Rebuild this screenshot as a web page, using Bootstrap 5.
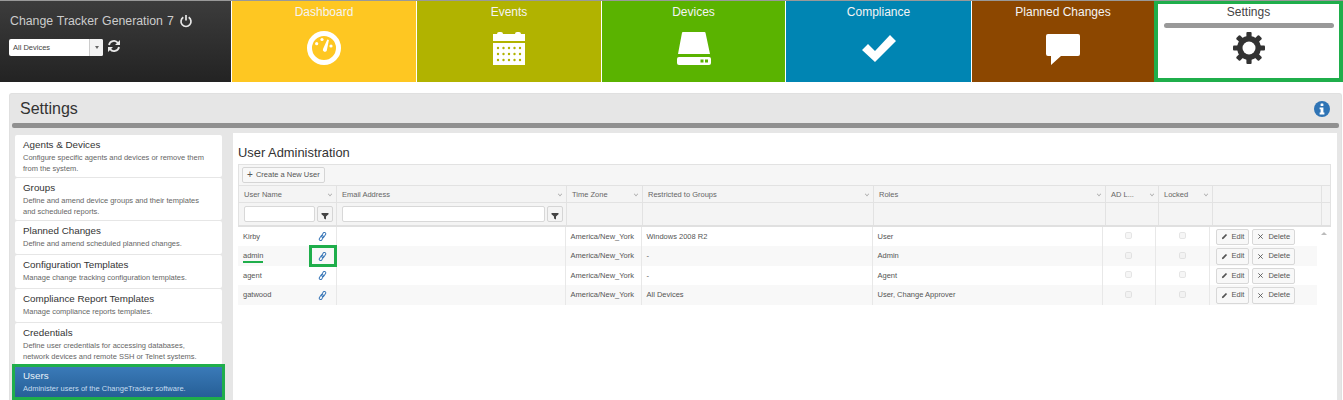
<!DOCTYPE html>
<html lang="en">
<head>
    <meta charset="UTF-8">
    <meta name="viewport" content="width=device-width, initial-scale=1.0">
    <title>Change Tracker - User Administration</title>
    <link href="https://cdn.jsdelivr.net/npm/bootstrap@5.3.0/dist/css/bootstrap.min.css" rel="stylesheet">
    <style>
        html, body { height: 400px; overflow: hidden; }
        body { font-family: "Liberation Sans", Arial, sans-serif; font-size: 7.5px; color: #555; background: #fff; }

        /* top bar */
        .top-bar { height: 82px; border-top: 1px solid #999; }
        .brand-box { width: 231px; flex: none; background: linear-gradient(#3c3c3c, #232323); padding: 13px 9px 0 10px; margin-right: 1px; }
        .brand-name { font-size: 12.3px; color: #ccc; word-spacing: .6px; line-height: 15px; gap: 5px; }
        .brand-row { margin-top: 10px; margin-left: -1px; }
        .device-pick { width: 94px; height: 17px; background: #fff; border-radius: 2px; font-size: 7.5px; color: #444; }
        .device-pick .pick-text { padding-left: 4px; line-height: 17px; }
        .device-pick .pick-arrow { width: 14px; border-left: 1px solid #ccc; background: #f3f3f3; border-radius: 0 2px 2px 0; }
        .caret-down { width: 0; height: 0; border: 2px solid transparent; border-top: 3px solid #666; border-bottom: 0; }
        .tile { width: 184px; flex: none; margin-right: 1px; color: #f4f4f4; font-size: 12px; text-align: center; padding-top: 4px; line-height: 15px; }
        .tile-icon { height: 46px; margin-top: 10px; }
        .tile-dash { background: #fec722; }
        .tile-events { background: #b1b300; }
        .tile-devices { background: #5ab300; width: 183px; }
        .tile-comply { background: #0085b3; width: 185px; }
        .tile-planned { background: #8c4700; margin-right: 0; width: 182px; }
        .tile-settings { flex: 1 1 auto; width: auto; margin: 0; background: #fff; color: #444; border: 4px solid #1fae4b; border-top-width: 3px; padding-top: 1px; }
        .tile-settings .tile-bar { height: 5px; background: #999; border-radius: 3px; margin: 3px 5px 0 6px; }
        .tile-settings .tile-icon { margin-top: 3px; height: 38px; }

        /* settings panel */
        .settings-panel { margin: 11px 1px 0 9px; height: 307px; overflow: hidden; background: #e6e6e6; border-radius: 3px 3px 0 0; padding: 0 5px; border: 1px solid #e0e0e0; border-bottom: 0; }
        .panel-head { height: 29px; padding: 0 6px 0 5px; }
        .panel-head h1 { font-size: 16px; font-weight: 400; color: #333; margin: 0; }
        .panel-rule { height: 5px; background: #909090; border-radius: 2px; margin: 0 -3px 5px -3px; }
        .panel-body { height: 267px; }

        /* side menu */
        .side-menu { width: 207px; flex: none; margin-right: 11px; margin-top: 2px; }
        .side-item { background: #fff; padding: 3px 11px 0 8px; margin-bottom: 1px; color: #666; line-height: 10.5px; border-radius: 2px; }
        .side-item h6 { font-size: 9.8px; font-weight: 400; color: #333; margin: 1px 0 2px; line-height: 12px; }
        .side-two { height: 42px; }
        .side-one { height: 33px; }
        .side-item.side-active { height: 30px; padding-top: 2px; background: linear-gradient(#3a7ab8, #265f97); color: #c5dcef; box-shadow: 0 0 0 3px #1fae4b; margin: 2px 0 0; position: relative; border-radius: 0; }
        .side-active h6 { color: #e8f1f8; }

        /* user grid */
        .users-box { background: #fff; flex: 1 1 auto; padding: 6px 6px 0 5px; margin-right: -1px; }
        .users-box h2 { font-size: 12.9px; font-weight: 400; color: #333; margin: 6px 0 4px; line-height: 15px; }
        .grid-tools { height: 21px; background: #f6f6f6; border: 1px solid #e2e2e2; border-bottom: 0; padding: 2px 3px; }
        .new-user { font-size: 7.5px; color: #555; padding: 0 4px; height: 16px; line-height: 14px; background: #f8f8f8; border: 1px solid #d5d5d5; border-radius: 2px; }
        .new-user .plus-sign { font-size: 10px; line-height: 10px; margin-right: 1px; vertical-align: -1px; }
        .grid-table { table-layout: fixed; border-collapse: collapse; font-size: 7.5px; margin: 0; }
        .head-table { width: 1092px; background: #f4f4f4; }
        .head-table th { font-weight: 400; color: #666; border: 1px solid #e2e2e2; background: #f4f4f4; padding: 1px 5px 0; height: 17px; white-space: nowrap; position: relative; vertical-align: middle; }
        .head-table .filter-cell { height: 23px; padding: 1px 3px 0 5px; border-bottom: 2px solid #e0e0e0; }
        .sort-caret { position: absolute; right: 4px; top: 6px; width: 4px; height: 4px; border-right: 1px solid #aaa; border-bottom: 1px solid #aaa; transform: rotate(45deg) scale(.8); }
        .filter-gap { gap: 2px; }
        .filter-input { height: 16px; padding: 0; min-height: 0; border-radius: 2px; border-color: #d8d8d8; font-size: 7.5px; }
        .filter-btn { width: 16px; height: 16px; flex: none; padding: 0; background: #f4f4f4; border: 1px solid #d5d5d5; border-radius: 2px; line-height: 1; }
        .grid-scroll { width: 1092px; }
        .body-table { width: 1079px; flex: none; }
        .body-table td { height: 19.5px; padding: 0 5px 0 5px; color: #555; border: 0; border-right: 1px solid #e8e8e8; background: #fff; white-space: nowrap; vertical-align: middle; box-shadow: none; }
        .body-table td:first-child { border-right: 0; }
        .body-table tr:nth-child(even) td { background: #f8f8f8; }
        .body-table td:last-child { border-right: 0; padding: 1px 0 0 6px; }
        .name-mark { border-bottom: 2px solid #1fae4b; padding-bottom: 1px; }
        .body-table td.link-mark { outline: 3px solid #1fae4b; outline-offset: -2px; }
        .lock-box { width: 7px; height: 7px; margin: 0 0 2px; border-color: #ccc; background: #eee; border-radius: 2px; vertical-align: middle; }
        .row-btn { font-size: 7.5px; color: #555; height: 16.5px; padding: 0 4px; line-height: 14px; background: #f8f8f8; border: 1px solid #d8d8d8; border-radius: 2px; margin-right: 3px; }
        .scroll-track { width: 13px; flex: 1 1 auto; text-align: center; padding-top: 5px; line-height: 0; }
        .caret-up { display: inline-block; width: 0; height: 0; border: 3px solid transparent; border-bottom: 3px solid #bbb; border-top: 0; }
    </style>
</head>
<body>
    <svg width="0" height="0" class="position-absolute">
        <defs>
            <symbol id="chain" viewBox="0 0 10 10">
                <g fill="none" stroke="#3b78b8" stroke-width="1.1">
                    <rect x="-3" y="-1.500" width="6" height="3" rx="1.500" transform="translate(6.300 3.300) rotate(-58)"/>
                    <rect x="-3" y="-1.500" width="6" height="3" rx="1.500" transform="translate(3.700 6.700) rotate(-58)"/>
                </g>
            </symbol>
            <symbol id="funnel" viewBox="0 0 8 8"><path d="M.5 1h7v1.200L5 4.400V7.500L3 6.500V4.400L.5 2.200z" fill="#444"/></symbol>
            <symbol id="pencil" viewBox="0 0 8 8"><path d="M1 7l.5-2L5.600 1l1.400 1.400L3 6.500z" fill="#555"/></symbol>
            <symbol id="cross" viewBox="0 0 8 8"><path d="M1.500 1.500l5 5M6.500 1.500l-5 5" stroke="#555" stroke-width="1"/></symbol>
        </defs>
    </svg>

    <div class="top-bar d-flex">
        <div class="brand-box">
            <div class="d-flex align-items-center brand-name">Change Tracker Generation 7
                <svg width="14" height="14" viewBox="0 0 14 14" style="margin-top:-2px"><path d="M4.300 3.300a5 5 0 1 0 5.400 0" fill="none" stroke="#e8e8e8" stroke-width="1.700"/><path d="M7 1v5.500" stroke="#e8e8e8" stroke-width="1.700"/></svg>
            </div>
            <div class="d-flex align-items-center brand-row">
                <div class="device-pick d-flex justify-content-between">
                    <span class="pick-text">All Devices</span>
                    <span class="pick-arrow d-flex align-items-center justify-content-center"><span class="caret-down"></span></span>
                </div>
                <svg width="14" height="14" viewBox="0 0 14 14" class="ms-1" style="margin-top:-3px"><g fill="none" stroke="#e8e8e8" stroke-width="1.800"><path d="M2 6a5 5 0 0 1 9-2"/><path d="M12 8a5 5 0 0 1-9 2"/></g><path d="M13 1v5H8zM1 13V8h5z" fill="#e8e8e8"/></svg>
            </div>
        </div>

        <div class="tile tile-dash">Dashboard
            <div class="tile-icon">
                <svg width="36" height="36" viewBox="0 0 36 36"><circle cx="18" cy="18" r="14.500" fill="none" stroke="#fff" stroke-width="5"/><circle cx="10.700" cy="13.700" r="1.600" fill="#fff"/><circle cx="16" cy="9.500" r="1.600" fill="#fff"/><circle cx="25" cy="16" r="1.600" fill="#fff"/><path d="M17 19l4.300-9.500 1.600.6L20.800 20.500a2 2 0 1 1-3.800-1.500z" fill="#fff"/></svg>
            </div>
        </div>
        <div class="tile tile-events">Events
            <div class="tile-icon">
                <svg width="34" height="36" viewBox="0 0 34 36"><path d="M1 4h4a2 2 0 0 1 2-2h2a2 2 0 0 1 2 2h12a2 2 0 0 1 2-2h2a2 2 0 0 1 2 2h4v7H1z" fill="#fff"/><rect x="1" y="13" width="32" height="22" fill="#fff"/><g fill="#b1b300"><circle cx="6" cy="18" r="1.200"/><circle cx="11.500" cy="18" r="1.200"/><circle cx="17" cy="18" r="1.200"/><circle cx="22.500" cy="18" r="1.200"/><circle cx="28" cy="18" r="1.200"/><circle cx="6" cy="24" r="1.200"/><circle cx="11.500" cy="24" r="1.200"/><circle cx="17" cy="24" r="1.200"/><circle cx="22.500" cy="24" r="1.200"/><circle cx="28" cy="24" r="1.200"/><circle cx="6" cy="30" r="1.200"/><circle cx="11.500" cy="30" r="1.200"/><circle cx="17" cy="30" r="1.200"/><circle cx="22.500" cy="30" r="1.200"/><circle cx="28" cy="30" r="1.200"/></g></svg>
            </div>
        </div>
        <div class="tile tile-devices">Devices
            <div class="tile-icon">
                <svg width="36" height="36" viewBox="0 0 36 36"><path d="M7 2h21.500a1 1 0 0 1 1 .8L34 24H2L6 2.800A1 1 0 0 1 7 2z" fill="#fff"/><rect x="1" y="27" width="34" height="8" rx="2" fill="#fff"/><rect x="24.500" y="29.500" width="3" height="3" fill="#5ab300"/><rect x="29" y="29.500" width="3" height="3" fill="#5ab300"/></svg>
            </div>
        </div>
        <div class="tile tile-comply">Compliance
            <div class="tile-icon">
                <svg width="36" height="36" viewBox="0 0 36 36"><path d="M1 20l6-6 7 7L29 5l6 6-21 21z" fill="#fff"/></svg>
            </div>
        </div>
        <div class="tile tile-planned">Planned Changes
            <div class="tile-icon">
                <svg width="36" height="36" viewBox="0 0 36 36"><path d="M3 4h30a2 2 0 0 1 2 2v18a2 2 0 0 1-2 2H16l-10 9v-9H3a2 2 0 0 1-2-2V6a2 2 0 0 1 2-2z" fill="#fff"/></svg>
            </div>
        </div>
        <div class="tile tile-settings">Settings
            <div class="tile-bar"></div>
            <div class="tile-icon">
                <svg width="34" height="34" viewBox="-17 -17 34 34">
                    <g fill="#333">
                        <rect x="-2.600" y="-16" width="5.200" height="32" rx="1"/>
                        <rect x="-2.600" y="-16" width="5.200" height="32" rx="1" transform="rotate(45)"/>
                        <rect x="-2.600" y="-16" width="5.200" height="32" rx="1" transform="rotate(90)"/>
                        <rect x="-2.600" y="-16" width="5.200" height="32" rx="1" transform="rotate(135)"/>
                    </g>
                    <circle r="9.200" fill="none" stroke="#333" stroke-width="5.400"/>
                    <circle r="6.500" fill="#fff"/>
                </svg>
            </div>
        </div>
    </div>

    <div class="settings-panel">
        <div class="panel-head d-flex justify-content-between align-items-center">
            <h1>Settings</h1>
            <svg width="16" height="16" viewBox="0 0 16 16"><circle cx="8" cy="8" r="8" fill="#2f74b5"/><rect x="6.600" y="2.500" width="2.800" height="2.600" rx=".6" fill="#fff"/><path d="M5.600 6.400h3.800v5.200h1v1.800H5.600v-1.800h1V8.200h-1z" fill="#fff"/></svg>
        </div>
        <div class="panel-rule"></div>
        <div class="d-flex panel-body">
            <div class="side-menu">
                <div class="side-item side-two"><h6>Agents &amp; Devices</h6>Configure specific agents and devices or remove them from the system.</div>
                <div class="side-item side-two"><h6>Groups</h6>Define and amend device groups and their templates and scheduled reports.</div>
                <div class="side-item side-one"><h6>Planned Changes</h6>Define and amend scheduled planned changes.</div>
                <div class="side-item side-one"><h6>Configuration Templates</h6>Manage change tracking configuration templates.</div>
                <div class="side-item side-one"><h6>Compliance Report Templates</h6>Manage compliance reports templates.</div>
                <div class="side-item side-two"><h6>Credentials</h6>Define user credentials for accessing databases, network devices and remote SSH or Telnet systems.</div>
                <div class="side-item side-active"><h6>Users</h6>Administer users of the ChangeTracker software.</div>
            </div>

            <div class="users-box">
                <h2>User Administration</h2>
                <div class="grid-tools">
                    <button class="btn new-user" type="button"><span class="plus-sign">+</span> Create a New User</button>
                </div>
                <table class="table grid-table head-table">
                    <colgroup>
                        <col style="width:98px"><col style="width:230px"><col style="width:76px"><col style="width:231px"><col style="width:232px"><col style="width:53px"><col style="width:54px"><col style="width:109px"><col style="width:9px">
                    </colgroup>
                    <tr>
                        <th>User Name<span class="sort-caret"></span></th>
                        <th>Email Address<span class="sort-caret"></span></th>
                        <th>Time Zone<span class="sort-caret"></span></th>
                        <th>Restricted to Groups<span class="sort-caret"></span></th>
                        <th>Roles<span class="sort-caret"></span></th>
                        <th>AD L...<span class="sort-caret"></span></th>
                        <th>Locked<span class="sort-caret"></span></th>
                        <th></th>
                        <th></th>
                    </tr>
                    <tr>
                        <th class="filter-cell"><div class="d-flex filter-gap"><input class="form-control filter-input" type="text" aria-label="Filter user name"><button class="btn filter-btn" type="button" aria-label="Filter"><svg width="8" height="8"><use href="#funnel"/></svg></button></div></th>
                        <th class="filter-cell"><div class="d-flex filter-gap"><input class="form-control filter-input" type="text" aria-label="Filter email"><button class="btn filter-btn" type="button" aria-label="Filter"><svg width="8" height="8"><use href="#funnel"/></svg></button></div></th>
                        <th class="filter-cell"></th><th class="filter-cell"></th><th class="filter-cell"></th><th class="filter-cell"></th><th class="filter-cell"></th><th class="filter-cell"></th><th class="filter-cell"></th>
                    </tr>
                </table>
                <div class="d-flex grid-scroll">
                    <table class="table grid-table body-table">
                        <colgroup>
                            <col style="width:72px"><col style="width:26px"><col style="width:229px"><col style="width:76px"><col style="width:231px"><col style="width:230px"><col style="width:53px"><col style="width:54px"><col>
                        </colgroup>
                        <tbody id="userRows"></tbody>
                    </table>
                    <div class="scroll-track"><span class="caret-up"></span></div>
                </div>
            </div>
        </div>
    </div>

    <script src="https://cdn.jsdelivr.net/npm/bootstrap@5.3.0/dist/js/bootstrap.bundle.min.js"></script>
    <script>
    // user rows for the grid
    const users = [
        { name: 'Kirby', groups: 'Windows 2008 R2', roles: 'User' },
        { name: 'admin', groups: '-', roles: 'Admin', marked: true },
        { name: 'agent', groups: '-', roles: 'Agent' },
        { name: 'gatwood', groups: 'All Devices', roles: 'User, Change Approver' }
    ];

    document.getElementById('userRows').innerHTML = users.map(u => `
        <tr>
            <td>${u.marked ? `<span class="name-mark">${u.name}</span>` : u.name}</td>
            <td class="text-center p-0 ${u.marked ? 'link-mark' : ''}"><svg width="9" height="9"><use href="#chain"/></svg></td>
            <td></td>
            <td>America/New_York</td>
            <td>${u.groups}</td>
            <td>${u.roles}</td>
            <td class="text-center"><input class="form-check-input lock-box" type="checkbox" disabled></td>
            <td class="text-center"><input class="form-check-input lock-box" type="checkbox" disabled></td>
            <td>
                <button class="btn row-btn" type="button"><svg width="7" height="7" class="me-1"><use href="#pencil"/></svg>Edit</button><button class="btn row-btn" type="button"><svg width="7" height="7" class="me-1"><use href="#cross"/></svg>Delete</button>
            </td>
        </tr>`).join('');
    </script>
</body>
</html>
